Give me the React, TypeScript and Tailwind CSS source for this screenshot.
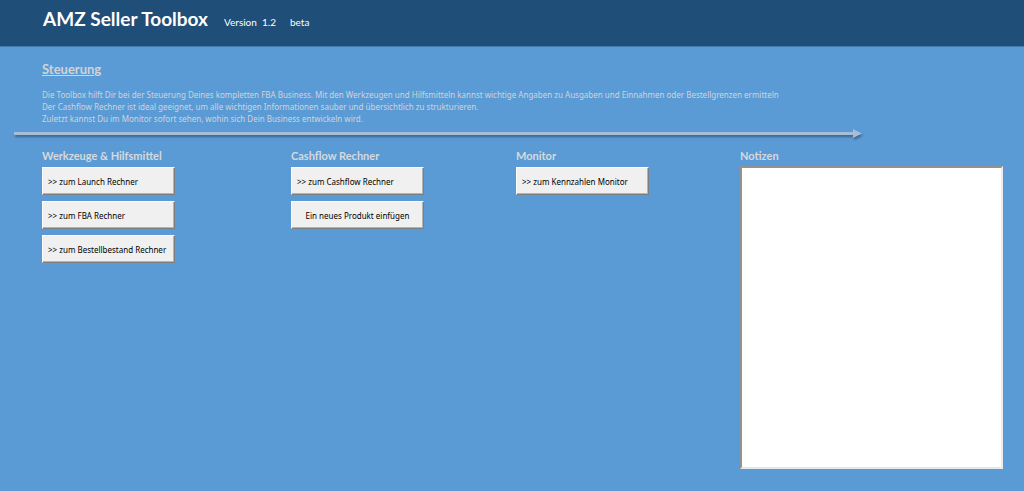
import { useState } from 'react';

interface ToolButtonProps {
  label: string;
  centered?: boolean;
}

interface ToolColumn {
  title: string;
  tools: ToolButtonProps[];
}

const columns: ToolColumn[] = [
  {
    title: 'Werkzeuge & Hilfsmittel',
    tools: [
      { label: '>> zum Launch Rechner' },
      { label: '>> zum FBA Rechner' },
      { label: '>> zum Bestellbestand Rechner' },
    ],
  },
  {
    title: 'Cashflow Rechner',
    tools: [
      { label: '>> zum Cashflow Rechner' },
      { label: 'Ein neues Produkt einfügen', centered: true },
    ],
  },
  {
    title: 'Monitor',
    tools: [{ label: '>> zum Kennzahlen Monitor' }],
  },
];

function ToolButton({ label, centered }: ToolButtonProps) {
  return (
    <button
      type="button"
      className={`h-7 w-[133px] border border-t-white border-r-[#7c7f82] border-b-[#7c7f82] border-l-white bg-[#f0f0f0] px-[5px] pt-px font-['Noto_Sans',sans-serif] text-[8px] whitespace-nowrap text-black shadow-[inset_-1px_-1px_0_#b4b4b0] active:bg-[#e4e4e4] ${
        centered ? 'text-center' : 'text-left'
      }`}
    >
      {label}
    </button>
  );
}

export default function App() {
  const [notes, setNotes] = useState('');

  return (
    <div className="min-h-screen bg-[#5b9bd5] font-['Lato',sans-serif]">
      {/* Header */}
      <header className="flex h-[47px] items-baseline border-b border-[#3f78aa] bg-[#1f4e78] pt-[5px] pl-[43px] text-white">
        <h1 className="text-[19px] leading-7 font-bold">AMZ Seller Toolbox</h1>
        <span className="ml-4 text-[10px]">Version&nbsp; 1.2</span>
        <span className="ml-[14px] text-[10px]">beta</span>
      </header>

      <main>
        {/* Intro */}
        <section className="px-[42px] pt-[14px] text-[#d0d3d8]">
          <h2 className="text-[13px] leading-4 font-bold underline">Steuerung</h2>
          <p className="mt-3 font-['Noto_Sans',sans-serif] text-[8px] leading-3">
            Die Toolbox hilft Dir bei der Steuerung Deines kompletten FBA Business. Mit den Werkzeugen und Hilfsmitteln kannst wichtige Angaben zu Ausgaben und Einnahmen oder Bestellgrenzen ermitteln
            <br />
            Der Cashflow Rechner ist ideal geeignet, um alle wichtigen Informationen sauber und übersichtlich zu strukturieren.
            <br />
            Zuletzt kannst Du im Monitor sofort sehen, wohin sich Dein Business entwickeln wird.
          </p>
        </section>

        {/* Divider arrow */}
        <div className="mt-1 mr-[162px] ml-[14px] flex items-center drop-shadow-[1px_2px_1px_rgba(0,0,0,0.35)]">
          <div className="h-[3px] flex-1 bg-[#a5bdd6]" />
          <svg className="h-[9px] w-[9px]" viewBox="0 0 9 9" aria-hidden="true">
            <path d="M0 0L9 4.5L0 9Z" fill="#a5bdd6" />
          </svg>
        </div>

        {/* Tools and notes */}
        <div className="mt-[10px] grid grid-cols-[249fr_225fr_224fr_263fr] pr-[21px] pb-[21px] pl-[42px]">
          {columns.map((column) => (
            <section key={column.title}>
              <h3 className="text-[11px] leading-4 font-bold text-[#d6d9dd]">{column.title}</h3>
              <div className="mt-[3px] flex flex-col items-start gap-[6px]">
                {column.tools.map((tool) => (
                  <ToolButton key={tool.label} {...tool} />
                ))}
              </div>
            </section>
          ))}

          <div>
            <label htmlFor="notizen" className="block text-[11px] leading-4 font-bold text-[#d6d9dd]">
              Notizen
            </label>
            <textarea
              id="notizen"
              value={notes}
              onChange={(e) => setNotes(e.target.value)}
              className="mt-[2px] block h-[303px] w-full resize-none border-2 border-t-[#929292] border-r-[#ececf0] border-b-[#e4e8ee] border-l-[#929292] bg-white p-1 text-[11px] outline-none"
            />
          </div>
        </div>
      </main>
    </div>
  );
}
